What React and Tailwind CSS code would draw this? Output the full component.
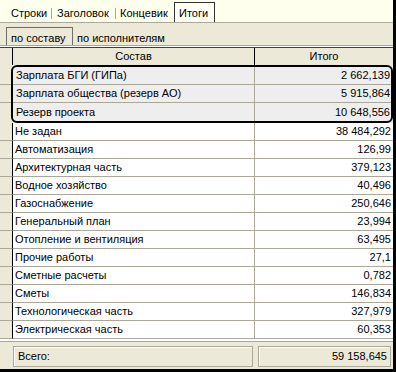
import React from "react";

const selected = [
  ["Зарплата БГИ (ГИПа)", "2 662,139"],
  ["Зарплата общества (резерв АО)", "5 915,864"],
  ["Резерв проекта", "10 648,556"],
];

const rows = [
  ["Не задан", "38 484,292"],
  ["Автоматизация", "126,99"],
  ["Архитектурная часть", "379,123"],
  ["Водное хозяйство", "40,496"],
  ["Газоснабжение", "250,646"],
  ["Генеральный план", "23,994"],
  ["Отопление и вентиляция", "63,495"],
  ["Прочие работы", "27,1"],
  ["Сметные расчеты", "0,782"],
  ["Сметы", "146,834"],
  ["Технологическая часть", "327,979"],
  ["Электрическая часть", "60,353"],
];

export default function App() {
  return (
    <div
      className="w-[396px] h-[372px] bg-black overflow-hidden text-[11px] leading-none text-black"
      style={{ fontFamily: '"Liberation Sans", Arial, sans-serif' }}
    >
      <div className="w-[393px] h-[369px] bg-[#ece9d8] flex flex-col">
        {/* main tabs */}
        <div className="h-[23px] bg-[#ffffee] border-b border-[#aca899] flex items-stretch shrink-0">
          <div className="w-[51px] pl-[11px] pt-[4px] flex items-center">Строки</div>
          <div className="w-px h-[11px] bg-[#aca899] self-center mt-[4px]" />
          <div className="w-[63px] pl-[5px] pt-[4px] flex items-center">Заголовок</div>
          <div className="w-px h-[11px] bg-[#aca899] self-center mt-[4px]" />
          <div className="w-[58px] pl-[4px] pt-[4px] flex items-center">Концевик</div>
          <div className="w-[41px] mt-[2px] border-l border-t border-r border-[#333] bg-[#fffff4] pl-[4px] pt-[2px] flex items-center">
            Итоги
          </div>
        </div>

        {/* sub tabs */}
        <div className="h-[22px] flex items-end pl-[6px] shrink-0">
          <div className="h-[18px] w-[67px] border-l border-t border-r border-[#716f64] pl-[4px] pt-[4px] flex items-center">
            по составу
          </div>
          <div className="h-[18px] pl-[4px] pt-[4px] flex items-center">по исполнителям</div>
        </div>
        <div className="h-px bg-[#aca899] shrink-0" />
        <div className="h-px bg-white shrink-0" />

        {/* header */}
        <div className="h-[18px] border-t border-[#404040] flex shrink-0">
          <div className="w-[12px]" />
          <div className="w-px bg-black" />
          <div className="w-[241px] flex items-center justify-center">Состав</div>
          <div className="w-px bg-black" />
          <div className="w-[138px] flex items-center justify-center">Итого</div>
        </div>

        {/* selected block */}
        <div className="flex h-[58px] shrink-0">
          <div className="w-[11px] flex flex-col">
            <div className="h-[2px]" />
            <div className="h-[18px] border-b border-[#aca899]" />
            <div className="h-[18px] border-b border-[#aca899]" />
            <div className="h-[18px]" />
          </div>
          <div className="w-[382px] border-2 border-black rounded-[6px] bg-[#eeeeee] overflow-hidden flex flex-col">
            {selected.map(([name, val], i) => (
              <div
                key={name}
                className={`h-[18px] flex ${i < 2 ? "border-b border-[#aca899]" : ""}`}
              >
                <div className="w-[241px] pl-[3px] flex items-center whitespace-nowrap">{name}</div>
                <div className="flex-1 border-l border-[#aca899] pr-px flex items-center justify-end">
                  {val}
                </div>
              </div>
            ))}
          </div>
        </div>

        {/* normal rows */}
        <div className="flex flex-col shrink-0">
          {rows.map(([name, val]) => (
            <div key={name} className="h-[18px] flex">
              <div className="w-[12px] border-b border-[#aca899]" />
              <div className="w-[242px] bg-white border-l border-black border-b border-b-[#aca899] pl-[2px] flex items-center whitespace-nowrap">
                {name}
              </div>
              <div className="w-[139px] bg-white border-l border-b border-[#aca899] pr-[2px] flex items-center justify-end">
                {val}
              </div>
            </div>
          ))}
        </div>
        <div className="h-[2px] bg-white shrink-0" />
        <div className="h-px bg-[#aca899] shrink-0" />

        {/* footer */}
        <div className="flex-1 flex pl-[13px] pt-[4px] gap-[5px]">
          <div className="w-[240px] h-[21px] border border-[#aca899] shadow-[inset_1px_1px_0_#ffffff] pl-[4px] flex items-center">
            Всего:
          </div>
          <div className="w-[133px] h-[21px] border border-[#aca899] shadow-[inset_1px_1px_0_#ffffff] pr-[3px] flex items-center justify-end">
            59 158,645
          </div>
        </div>
      </div>
    </div>
  );
}
